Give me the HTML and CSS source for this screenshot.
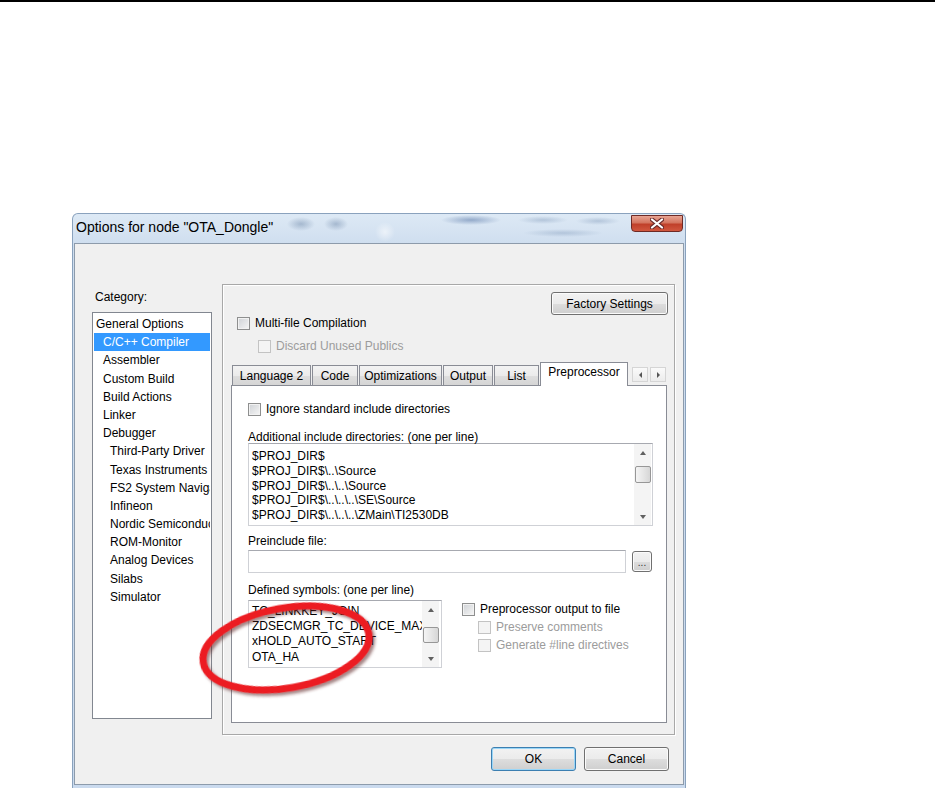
FILE: index.html
```html
<!DOCTYPE html>
<html>
<head>
<meta charset="utf-8">
<title>Options for node</title>
<link rel="stylesheet" href="styles.css">
</head>
<body>
<div class="rule"></div>
<div class="stage">
  <div class="window">
    <div class="titlebar">
      <span class="title">Options for node "OTA_Dongle"</span>
      <div class="close">
        <svg width="14" height="11" viewBox="0 0 14 11">
          <path d="M2 1.5 L12 9.5 M12 1.5 L2 9.5" stroke="#6a2a2a" stroke-width="4.2" stroke-linecap="round"/>
          <path d="M2 1.5 L12 9.5 M12 1.5 L2 9.5" stroke="#ffffff" stroke-width="2.2" stroke-linecap="round"/>
        </svg>
      </div>
    </div>
    <div class="client">
      <div class="main">
        <div class="category">
          <div class="cat-label">Category:</div>
          <ul class="catlist">
            <li class="l0">General Options</li>
            <li class="l1 sel">C/C++ Compiler</li>
            <li class="l1">Assembler</li>
            <li class="l1">Custom Build</li>
            <li class="l1">Build Actions</li>
            <li class="l1">Linker</li>
            <li class="l1">Debugger</li>
            <li class="l2">Third-Party Driver</li>
            <li class="l2">Texas Instruments</li>
            <li class="l2">FS2 System Navigator</li>
            <li class="l2">Infineon</li>
            <li class="l2">Nordic Semiconductor</li>
            <li class="l2">ROM-Monitor</li>
            <li class="l2">Analog Devices</li>
            <li class="l2">Silabs</li>
            <li class="l2">Simulator</li>
          </ul>
        </div>
        <div class="group">
          <div class="factory-row"><div class="btn factory">Factory Settings</div></div>
          <div class="check multi"><span class="box"></span><span>Multi-file Compilation</span></div>
          <div class="check discard disabled"><span class="box"></span><span>Discard Unused Publics</span></div>
          <div class="tabs">
            <div class="tab t-lang">Language 2</div>
            <div class="tab t-code">Code</div>
            <div class="tab t-opt">Optimizations</div>
            <div class="tab t-out">Output</div>
            <div class="tab t-list">List</div>
            <div class="tab t-pre active">Preprocessor</div>
            <div class="tab-arrows">
              <span class="tarr"><span class="tri-left"></span></span>
              <span class="tarr"><span class="tri-right"></span></span>
            </div>
          </div>
          <div class="page">
            <div class="check ignore"><span class="box"></span><span>Ignore standard include directories</span></div>
            <div class="field-label inc-label">Additional include directories: (one per line)</div>
            <div class="textbox inc">
              <div class="lines">
                <div>$PROJ_DIR$</div>
                <div>$PROJ_DIR$\..\Source</div>
                <div>$PROJ_DIR$\..\..\Source</div>
                <div>$PROJ_DIR$\..\..\..\SE\Source</div>
                <div>$PROJ_DIR$\..\..\..\ZMain\TI2530DB</div>
              </div>
              <div class="vscroll">
                <span class="sarrow"><span class="tri-up"></span></span>
                <span class="thumb inc-thumb"></span>
                <span class="strack"></span>
                <span class="sarrow"><span class="tri-down"></span></span>
              </div>
            </div>
            <div class="field-label pre-label">Preinclude file:</div>
            <div class="input-row">
              <div class="input"></div>
              <div class="btn dots">...</div>
            </div>
            <div class="field-label def-label">Defined symbols: (one per line)</div>
            <div class="bottom-row">
              <div class="textbox sym">
                <div class="lines">
                  <div>TC_LINKKEY_JOIN</div>
                  <div>ZDSECMGR_TC_DEVICE_MAX=1</div>
                  <div>xHOLD_AUTO_START</div>
                  <div>OTA_HA</div>
                </div>
                <div class="vscroll">
                  <span class="sarrow"><span class="tri-up"></span></span>
                  <span class="thumb sym-thumb"></span>
                  <span class="strack"></span>
                  <span class="sarrow"><span class="tri-down"></span></span>
                </div>
              </div>
              <div class="pp-options">
                <div class="check"><span class="box"></span><span>Preprocessor output to file</span></div>
                <div class="check sub disabled"><span class="box"></span><span>Preserve comments</span></div>
                <div class="check sub disabled"><span class="box"></span><span>Generate #line directives</span></div>
              </div>
            </div>
          </div>
        </div>
      </div>
      <div class="footer">
        <div class="btn ok">OK</div>
        <div class="btn cancel">Cancel</div>
      </div>
    </div>
  </div>
</div>
<svg class="annot" width="200" height="115" viewBox="0 0 200 115">
  <defs>
    <filter id="sh" x="-20%" y="-20%" width="140%" height="150%">
      <feDropShadow dx="2" dy="3" stdDeviation="1.8" flood-color="#5a1a1a" flood-opacity="0.55"/>
    </filter>
  </defs>
  <ellipse cx="96" cy="58" rx="84" ry="40" transform="rotate(-10 96 58)" fill="none" stroke="#ec1c24" stroke-width="7" filter="url(#sh)"/>
</svg>
</body>
</html>
```
FILE: styles.css
```css
* { box-sizing: border-box; }
html, body { margin: 0; padding: 0; }
body {
  width: 935px;
  height: 788px;
  background: #ffffff;
  font-family: "Liberation Sans", Arial, sans-serif;
  font-size: 12px;
  color: #000;
  overflow: hidden;
  position: relative;
}
.rule { height: 2px; background: #000; }
.stage { padding: 211px 0 0 72px; }

.window {
  width: 614px;
  height: 575px;
  border: 1px solid #8aa2bd;
  border-bottom: none;
  border-radius: 6px 6px 0 0;
  padding: 0 1px;
  position: relative;
  background:
    radial-gradient(ellipse 14px 7px at 228px 10px, rgba(70,100,140,.35), transparent),
    radial-gradient(ellipse 12px 7px at 263px 10px, rgba(70,100,140,.35), transparent),
    radial-gradient(ellipse 10px 10px at 312px 18px, rgba(255,255,255,.55), transparent),
    radial-gradient(ellipse 30px 5px at 398px 6px, rgba(60,95,150,.45), transparent),
    radial-gradient(ellipse 25px 4px at 470px 6px, rgba(90,120,160,.3), transparent),
    radial-gradient(ellipse 22px 4px at 525px 7px, rgba(90,120,160,.3), transparent),
    radial-gradient(ellipse 40px 4px at 490px 19px, rgba(90,120,160,.28), transparent),
    linear-gradient(#dde9f5, #cfdeef 30px, #cadaee);
}
.titlebar {
  height: 29px;
  display: flex;
  align-items: center;
  padding-left: 2px;
}
.title { font-size: 14px; color: #000; position: relative; top: -2px; }
.close {
  position: absolute;
  top: 1px;
  right: 2px;
  width: 52px;
  height: 17px;
  border: 1px solid #6e2a25;
  border-radius: 0 0 4px 4px;
  background: linear-gradient(#e8a493, #d4755f 45%, #c0402a 55%, #d1573f);
  display: flex;
  align-items: center;
  justify-content: center;
}

.client {
  width: 610px;
  height: 542px;
  border: 1px solid #8d9bab;
  background: #f0f0f0;
  padding: 40px 0 0 17px;
}
.main { display: flex; align-items: flex-start; }
.category { width: 120px; }
.cat-label { margin-top: 6px; line-height: 14px; padding-left: 3px; }
.catlist {
  list-style: none;
  margin: 8px 0 0;
  padding: 2px 0 0;
  height: 407px;
  border: 1px solid #828790;
  background: #fff;
  overflow: hidden;
}
.catlist li {
  height: 18.2px;
  line-height: 18.2px;
  white-space: nowrap;
  overflow: hidden;
  margin-left: 1px;
  margin-right: 1px;
}
.catlist .l0 { padding-left: 2px; }
.catlist .l1 { padding-left: 9px; }
.catlist .l2 { padding-left: 16px; }
.catlist .sel { background: #3399ff; color: #fff; }

.group {
  margin-left: 10px;
  width: 453px;
  height: 451px;
  border: 1px solid #a8a8a8;
  box-shadow: inset 1px 1px 0 #fff, 1px 1px 0 #fff;
  padding: 7px 6px 0 8px;
}
.factory-row { display: flex; justify-content: flex-end; }
.btn {
  border: 1px solid #707070;
  border-radius: 3px;
  background: linear-gradient(#f2f2f2 0%, #ebebeb 50%, #dddddd 51%, #cfcfcf 100%);
  box-shadow: inset 0 0 0 1px #fbfbfb;
  display: flex;
  align-items: center;
  justify-content: center;
  color: #000;
}
.factory { width: 117px; height: 23px; }

.check { display: flex; align-items: center; height: 14px; gap: 5px; white-space: nowrap; }
.box {
  width: 13px;
  height: 13px;
  flex: none;
  border: 1px solid #8e8f8f;
  background: linear-gradient(135deg, #cfd2d6, #f6f6f6);
  box-shadow: inset 0 0 0 1px #f2f2f2;
}
.check.disabled { color: #9c9c9c; }
.check.disabled .box { border-color: #c3c3c3; background: #f4f4f4; box-shadow: none; }
.multi { margin-top: 1px; padding-left: 6px; }
.discard { margin-top: 9px; padding-left: 27px; }

.tabs {
  margin-top: 9px;
  height: 23px;
  display: flex;
  align-items: flex-end;
  padding-left: 1px;
  position: relative;
  z-index: 1;
}
.tab {
  height: 20px;
  margin-right: 1px;
  border: 1px solid #898c95;
  border-bottom: none;
  background: linear-gradient(#f3f3f3, #ebebeb 50%, #dedede 51%, #d5d5d5);
  display: flex;
  align-items: center;
  justify-content: center;
  white-space: nowrap;
}
.t-lang { width: 79px; }
.t-code { width: 46px; }
.t-opt { width: 83px; }
.t-out { width: 50px; }
.t-list { width: 45px; }
.t-pre { width: 88px; }
.tab.active {
  height: 24px;
  margin-bottom: -1px;
  background: #fff;
  align-items: flex-start;
  padding-top: 2px;
}
.tab-arrows {
  display: flex;
  margin-left: 3px;
  margin-bottom: 3px;
  gap: 2px;
}
.tarr {
  width: 16px;
  height: 15px;
  border: 1px solid #d5d5d5;
  background: linear-gradient(#fafafa, #ececec);
  display: flex;
  align-items: center;
  justify-content: center;
}
.tri-left { border-right: 3px solid #555; border-top: 3px solid transparent; border-bottom: 3px solid transparent; }
.tri-right { border-left: 3px solid #555; border-top: 3px solid transparent; border-bottom: 3px solid transparent; }

.page {
  width: 436px;
  height: 338px;
  border: 1px solid #898c95;
  background: #fff;
  padding: 16px 0 0 16px;
}
.field-label { line-height: 12px; height: 12px; white-space: nowrap; }
.inc-label { margin-top: 15px; }
.pre-label { margin-top: 9px; }
.def-label { margin-top: 11px; }

.textbox {
  display: flex;
  border: 1px solid #cfd1d6;
  border-top-color: #a7a9b0;
  background: #fff;
}
.textbox .lines { flex: 1; padding: 3px 0 0 3px; overflow: hidden; white-space: nowrap; }
.inc { width: 405px; height: 83px; }
.inc .lines { line-height: 14.8px; padding-top: 5px; }
.sym { width: 194px; height: 68px; }
.sym .lines { line-height: 15.2px; padding-top: 3px; }
.vscroll {
  width: 17px;
  flex: none;
  display: flex;
  flex-direction: column;
  align-items: center;
  background: #f4f4f4;
  margin: 0 1px 0 0;
}
.sym .vscroll { margin-right: 2px; }
.sarrow { height: 17px; width: 17px; display: flex; align-items: center; justify-content: center; }
.tri-up { border-bottom: 4px solid #606060; border-left: 3.5px solid transparent; border-right: 3.5px solid transparent; }
.tri-down { border-top: 4px solid #606060; border-left: 3.5px solid transparent; border-right: 3.5px solid transparent; }
.thumb {
  width: 16px;
  height: 17px;
  border: 1px solid #979797;
  border-radius: 2px;
  background: linear-gradient(90deg, #f4f4f4, #e6e6e6 50%, #d6d6d6);
}
.inc-thumb { margin-top: 5px; }
.sym-thumb { margin-top: 9px; height: 16px; }
.strack { flex: 1; }

.input-row { display: flex; align-items: center; margin-top: 3px; height: 23px; }
.input {
  width: 378px;
  height: 23px;
  border: 1px solid #cfd1d6;
  border-top-color: #a7a9b0;
  background: #fff;
}
.dots {
  width: 20px;
  height: 21px;
  margin-left: 6px;
  align-items: flex-end;
  font-size: 10px;
  line-height: 12px;
  padding-bottom: 2px;
  color: #333;
}
.bottom-row { display: flex; margin-top: 4px; }
.pp-options { margin-left: 20px; padding-top: 2px; display: flex; flex-direction: column; gap: 4px; }
.pp-options .check { height: 14px; }
.pp-options .sub { padding-left: 16px; }

.footer {
  display: flex;
  justify-content: flex-end;
  gap: 8px;
  margin-top: 12px;
  padding-right: 14px;
}
.ok, .cancel { width: 85px; height: 24px; }
.ok {
  border-color: #3c7fb1;
  box-shadow: inset 0 0 0 1px #9ad6f7;
}

.annot { position: absolute; left: 190px; top: 590px; }
```
